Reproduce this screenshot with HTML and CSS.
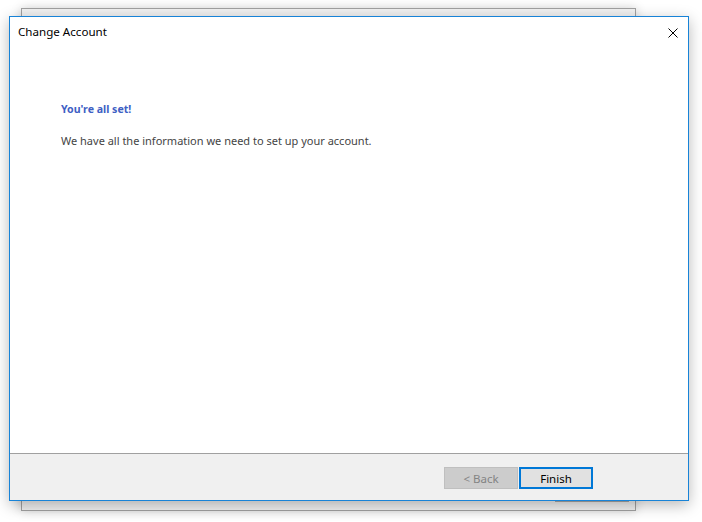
FILE: index.html
```html
<!DOCTYPE html>
<html lang="en">
<head>
    <meta charset="UTF-8">
    <meta name="viewport" content="width=device-width, initial-scale=1.0">
    <title>Change Account</title>
    <link rel="stylesheet" href="styles.css">
</head>
<body>
    <div class="desktop">
        <div class="window back-window">
            <div class="back-button"></div>
        </div>
        <div class="window dialog">
            <div class="title-bar">
                <span class="title">Change Account</span>
                <button class="close" aria-label="Close">
                    <svg width="10" height="10" viewBox="0 0 10 10">
                        <path d="M0.5 0.5 L9.5 9.5 M9.5 0.5 L0.5 9.5" stroke="#000" stroke-width="1" fill="none"/>
                    </svg>
                </button>
            </div>
            <div class="content">
                <h2>You're all set!</h2>
                <p>We have all the information we need to set up your account.</p>
            </div>
            <div class="footer">
                <button class="btn" disabled>&lt; Back</button>
                <button class="btn btn-default">Finish</button>
            </div>
        </div>
    </div>
</body>
</html>
```

FILE: styles.css
```css
body {
    margin: 0;
    background-color: #fff;
    font-family: "Noto Sans", "Open Sans", sans-serif;
    font-size: 12px;
}
.desktop {
    position: relative;
    width: 702px;
    height: 522px;
    overflow: hidden;
}
.window {
    position: absolute;
    box-sizing: border-box;
}
.back-window {
    left: 21px;
    top: 8px;
    width: 615px;
    height: 503px;
    border: 1px solid #a0a0a0;
    background-color: #f0f0f0;
    box-shadow: 0 0 10px rgba(0, 0, 0, 0.18);
}
.back-button {
    position: absolute;
    left: 533px;
    bottom: 8px;
    width: 74px;
    height: 2px;
    background-color: #a9a9a9;
}
.dialog {
    left: 9px;
    top: 16px;
    width: 680px;
    height: 485px;
    border: 1px solid #1883d7;
    background-color: #fff;
    display: flex;
    flex-direction: column;
    box-shadow: 0 4px 14px rgba(0, 0, 0, 0.28);
}
.title-bar {
    height: 30px;
    display: flex;
    align-items: center;
    justify-content: space-between;
    padding: 0 10px 0 8px;
}
.title {
    color: #000;
    font-size: 11.6px;
    padding-bottom: 1px;
}
.close {
    border: none;
    background: none;
    padding: 0;
    width: 10px;
    height: 10px;
    margin-top: 1px;
    display: flex;
}
.content {
    flex: 1;
    padding: 54px 51px 0;
    color: #444;
}
.content h2 {
    margin: 0 0 16px;
    font-size: 10.6px;
    font-weight: bold;
    color: #3e60c4;
    line-height: 16px;
}
.content p {
    margin: 0;
    line-height: 16px;
    font-size: 11px;
}
.footer {
    box-sizing: border-box;
    height: 47px;
    border-top: 1px solid #a0a0a0;
    background-color: #f0f0f0;
    display: flex;
    justify-content: flex-end;
    align-items: flex-start;
    gap: 1px;
    padding: 13px 95px 0 0;
}
.btn {
    box-sizing: border-box;
    width: 74px;
    height: 22px;
    font-family: inherit;
    font-size: 11.5px;
    color: #000;
    background-color: #e1e1e1;
    border: 1px solid #adadad;
    padding: 0;
}
.btn:disabled {
    background-color: #cccccc;
    border-color: #bfbfbf;
    color: #838383;
}
.btn-default {
    border: 2px solid #0078d7;
}
```
